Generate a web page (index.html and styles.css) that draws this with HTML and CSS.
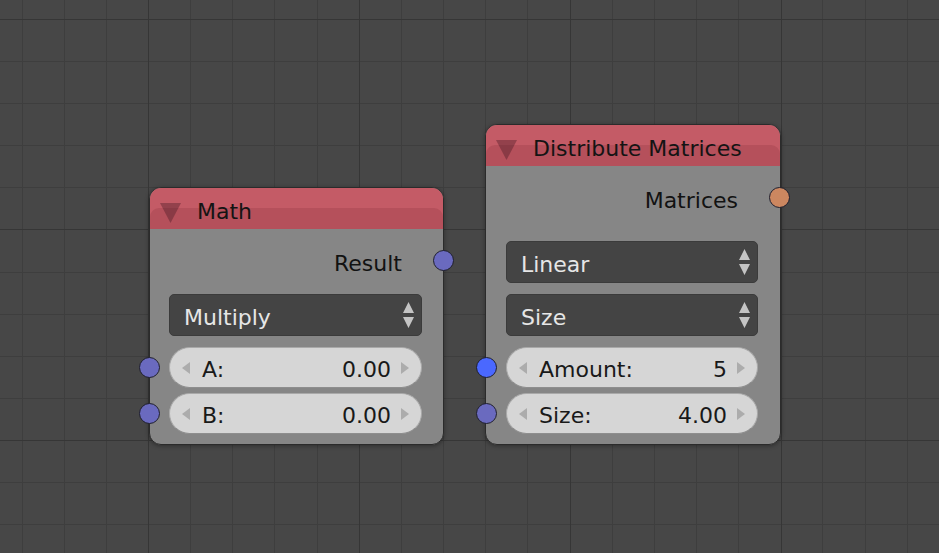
FILE: index.html
```html
<!DOCTYPE html>
<html lang="en">
<head>
<meta charset="utf-8">
<title>Node Editor</title>
<link rel="stylesheet" href="styles.css">
</head>
<body>
<main class="canvas">
  <svg class="grid" width="939" height="553" viewBox="0 0 939 553" aria-hidden="true">
    <path class="grid-minor" d="M22.5 0V553M64.5 0V553M106.5 0V553M190.5 0V553M232.5 0V553M274.5 0V553M317.5 0V553M401.5 0V553M443.5 0V553M485.5 0V553M527.5 0V553M612.5 0V553M654.5 0V553M696.5 0V553M738.5 0V553M822.5 0V553M865.5 0V553M907.5 0V553M0 61.5H939M0 103.5H939M0 145.5H939M0 187.5H939M0 272.5H939M0 314.5H939M0 356.5H939M0 398.5H939M0 482.5H939M0 524.5H939"/>
    <path class="grid-major" d="M148.5 0V553M359.5 0V553M570.5 0V553M781.5 0V553M0 19.5H939M0 229.5H939M0 440.5H939"/>
  </svg>

  <section class="node node-math">
    <header class="node-header">
      <svg class="collapse" width="21" height="20" viewBox="0 0 21 20"><path d="M0 0H21L10.5 20Z"/></svg>
      <span class="node-title">Math</span>
    </header>
    <div class="node-body">
      <div class="output-row">
        <span>Result</span>
        <span class="socket socket-out socket-value"></span>
      </div>
      <div class="dropdown">
        <span class="dropdown-text">Multiply</span>
        <svg class="updown" width="11" height="26" viewBox="0 0 11 26"><path d="M5.5 0L11 11H0Z M0 15H11L5.5 26Z"/></svg>
      </div>
      <div class="field">
        <span class="socket socket-in socket-value"></span>
        <svg class="arrow" width="8" height="12" viewBox="0 0 8 12"><path d="M8 0V12L0 6Z"/></svg>
        <span class="field-label">A:</span>
        <span class="field-value">0.00</span>
        <svg class="arrow" width="8" height="12" viewBox="0 0 8 12"><path d="M0 0V12L8 6Z"/></svg>
      </div>
      <div class="field">
        <span class="socket socket-in socket-value"></span>
        <svg class="arrow" width="8" height="12" viewBox="0 0 8 12"><path d="M8 0V12L0 6Z"/></svg>
        <span class="field-label">B:</span>
        <span class="field-value">0.00</span>
        <svg class="arrow" width="8" height="12" viewBox="0 0 8 12"><path d="M0 0V12L8 6Z"/></svg>
      </div>
    </div>
  </section>

  <section class="node node-dist">
    <header class="node-header">
      <svg class="collapse" width="21" height="20" viewBox="0 0 21 20"><path d="M0 0H21L10.5 20Z"/></svg>
      <span class="node-title">Distribute Matrices</span>
    </header>
    <div class="node-body node-body-dist">
      <div class="output-row output-row-wide">
        <span>Matrices</span>
        <span class="socket socket-out socket-matrix"></span>
      </div>
      <div class="dropdown">
        <span class="dropdown-text">Linear</span>
        <svg class="updown" width="11" height="26" viewBox="0 0 11 26"><path d="M5.5 0L11 11H0Z M0 15H11L5.5 26Z"/></svg>
      </div>
      <div class="dropdown">
        <span class="dropdown-text">Size</span>
        <svg class="updown" width="11" height="26" viewBox="0 0 11 26"><path d="M5.5 0L11 11H0Z M0 15H11L5.5 26Z"/></svg>
      </div>
      <div class="field">
        <span class="socket socket-in socket-int"></span>
        <svg class="arrow" width="8" height="12" viewBox="0 0 8 12"><path d="M8 0V12L0 6Z"/></svg>
        <span class="field-label">Amount:</span>
        <span class="field-value">5</span>
        <svg class="arrow" width="8" height="12" viewBox="0 0 8 12"><path d="M0 0V12L8 6Z"/></svg>
      </div>
      <div class="field">
        <span class="socket socket-in socket-value"></span>
        <svg class="arrow" width="8" height="12" viewBox="0 0 8 12"><path d="M8 0V12L0 6Z"/></svg>
        <span class="field-label">Size:</span>
        <span class="field-value">4.00</span>
        <svg class="arrow" width="8" height="12" viewBox="0 0 8 12"><path d="M0 0V12L8 6Z"/></svg>
      </div>
    </div>
  </section>
</main>
</body>
</html>
```

FILE: styles.css
```css
html, body {
  margin: 0;
  padding: 0;
}

body {
  width: 939px;
  height: 553px;
  overflow: hidden;
  background: #474747;
  font-family: "DejaVu Sans", "Liberation Sans", sans-serif;
}

.canvas {
  position: relative;
  width: 939px;
  height: 553px;
}

.grid {
  position: absolute;
  left: 0;
  top: 0;
  display: block;
}

.grid path {
  fill: none;
  stroke-width: 1;
  shape-rendering: crispEdges;
}

.grid-minor {
  stroke: #3e3e3e;
}

.grid-major {
  stroke: #363636;
}

.node {
  position: absolute;
  box-sizing: border-box;
  border: 1px solid #2b2b2b;
  border-radius: 12px;
  background: #868686;
  box-shadow: 0 1px 4px rgba(0, 0, 0, 0.35);
  font-size: 22px;
  display: flex;
  flex-direction: column;
}

.node-math {
  left: 149px;
  top: 187px;
  width: 295px;
  height: 258px;
}

.node-dist {
  left: 485px;
  top: 124px;
  width: 296px;
  height: 321px;
}

.node-header {
  position: relative;
  height: 41px;
  box-sizing: border-box;
  display: flex;
  align-items: flex-start;
  padding-left: 10px;
  background: #c45b66;
  border-radius: 11px 11px 0 0;
}

.node-header::before {
  content: "";
  position: absolute;
  left: 0;
  right: 0;
  bottom: 0;
  height: 21px;
  background: #b5505b;
  border-radius: 9px 9px 0 0;
}

.collapse {
  position: relative;
  margin-top: 15px;
  flex: none;
}

.collapse path {
  fill: rgba(60, 20, 30, 0.36);
}

.node-title {
  position: relative;
  margin-left: 16px;
  padding-top: 11px;
  line-height: 26px;
  color: #141414;
  white-space: nowrap;
}

.node-body {
  flex: 1;
  display: flex;
  flex-direction: column;
  padding: 12px 21px 10px 19px;
}

.node-body-dist {
  padding: 12px 22px 10px 20px;
}

.output-row {
  position: relative;
  box-sizing: border-box;
  height: 42px;
  padding: 10px 20px 0 0;
  line-height: 26px;
  text-align: right;
  color: #121212;
  margin-bottom: 11px;
}

.output-row-wide {
  margin-bottom: 21px;
}

.socket {
  position: absolute;
  box-sizing: border-box;
  width: 21px;
  height: 21px;
  border-radius: 50%;
  border: 1px solid #1f1f2e;
}

.socket-out {
  right: -32px;
  top: 9px;
}

.socket-in {
  left: -31px;
  top: 9px;
}

.socket-value {
  background: #6a6abf;
}

.socket-int {
  background: #4a68ff;
}

.socket-matrix {
  background: #cc8760;
}

.dropdown {
  box-sizing: border-box;
  height: 42px;
  display: flex;
  align-items: center;
  justify-content: space-between;
  padding: 0 7px 0 14px;
  background: #444444;
  border: 1px solid #3b3b3b;
  border-radius: 5px;
  color: #e6e6e6;
  margin-bottom: 11px;
}

.dropdown-text {
  line-height: 26px;
  padding-top: 6px;
}

.updown path {
  fill: #c4c4c4;
}

.field {
  position: relative;
  box-sizing: border-box;
  height: 41px;
  display: flex;
  align-items: center;
  padding: 0 12px;
  background: #d6d6d6;
  border: 1px solid #a9a9a9;
  border-bottom-color: #8e8e8e;
  border-radius: 21px;
  color: #191919;
  margin-bottom: 5px;
}

.field:last-child {
  margin-bottom: 0;
}

.arrow {
  flex: none;
}

.arrow path {
  fill: #acacac;
}

.field-label {
  flex: 1;
  margin-left: 12px;
  line-height: 26px;
  padding-top: 4px;
}

.field-value {
  margin-right: 10px;
  line-height: 26px;
  padding-top: 4px;
}
```
